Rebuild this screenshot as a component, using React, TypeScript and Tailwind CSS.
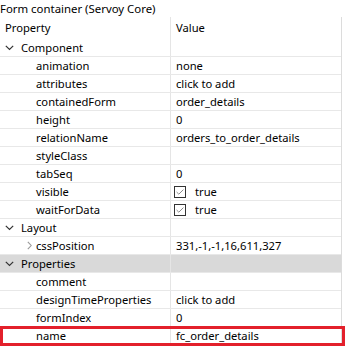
import React from "react";

type Row =
  | { kind: "cat"; label: string; gray?: boolean }
  | { kind: "prop"; label: string; value?: string; check?: boolean; expand?: boolean; red?: boolean };

const rows: Row[] = [
  { kind: "cat", label: "Component" },
  { kind: "prop", label: "animation", value: "none" },
  { kind: "prop", label: "attributes", value: "click to add" },
  { kind: "prop", label: "containedForm", value: "order_details" },
  { kind: "prop", label: "height", value: "0" },
  { kind: "prop", label: "relationName", value: "orders_to_order_details" },
  { kind: "prop", label: "styleClass", value: "" },
  { kind: "prop", label: "tabSeq", value: "0" },
  { kind: "prop", label: "visible", value: "true", check: true },
  { kind: "prop", label: "waitForData", value: "true", check: true },
  { kind: "cat", label: "Layout" },
  { kind: "prop", label: "cssPosition", value: "331,-1,-1,16,611,327", expand: true },
  { kind: "cat", label: "Properties", gray: true },
  { kind: "prop", label: "comment", value: "" },
  { kind: "prop", label: "designTimeProperties", value: "click to add" },
  { kind: "prop", label: "formIndex", value: "0" },
  { kind: "prop", label: "name", value: "fc_order_details", red: true },
];

function ChevronDown() {
  return (
    <svg width="9" height="6" viewBox="0 0 9 6" className="shrink-0">
      <path d="M0.8 0.8 L4.5 4.5 L8.2 0.8" fill="none" stroke="#333" strokeWidth="1.2" />
    </svg>
  );
}

function ChevronRight() {
  return (
    <svg width="5" height="9" viewBox="0 0 5 9" className="shrink-0">
      <path d="M0.8 0.8 L4.2 4.5 L0.8 8.2" fill="none" stroke="#9a9a9a" strokeWidth="1.1" />
    </svg>
  );
}

function Check() {
  return (
    <div className="w-[12px] h-[12px] border border-[#333] bg-white flex items-center justify-center shrink-0">
      <svg width="8" height="6" viewBox="0 0 8 6">
        <path d="M0.6 3 L2.8 5.2 L7.4 0.6" fill="none" stroke="#8a8a8a" strokeWidth="1" />
      </svg>
    </div>
  );
}

export default function App() {
  return (
    <div
      className="w-[346px] h-[347px] bg-white text-black text-[11.2px] leading-none overflow-hidden relative"
      style={{ fontFamily: '"Segoe UI", "Noto Sans", sans-serif' }}
    >
      <div className="h-[17px] flex items-center pl-0 text-[11.4px]">Form container (Servoy Core)</div>
      <div className="w-[342px] border-r border-[#dcdcdc]">
        <div className="h-[22px] flex">
          <div className="w-[171px] border-r border-[#e5e5e5] flex items-center pl-[5px]">Property</div>
          <div className="flex-1 flex items-center pl-[5px]">Value</div>
        </div>
        {rows.map((r, i) =>
          r.kind === "cat" ? (
            <div
              key={i}
              className={`h-[18px] flex border-b border-[#e8e8e8] ${r.gray ? "bg-[#d9d9d9]" : ""}`}
            >
              <div className="w-[171px] flex items-center pl-[5px] gap-[7px] border-r border-[#e5e5e5]">
                <ChevronDown />
                <span>{r.label}</span>
              </div>
              <div className="flex-1" />
            </div>
          ) : (
            <div key={i} className="h-[18px] flex border-b border-[#e8e8e8] relative">
              <div className="w-[171px] flex items-center border-r border-[#e5e5e5]">
                <div className="w-[36px] flex justify-end pr-[4px]">{r.expand ? <ChevronRight /> : null}</div>
                <span>{r.label}</span>
              </div>
              <div className="flex-1 flex items-center pl-[3px] gap-[9px]">
                {r.check ? <Check /> : null}
                <span className={r.check ? "" : "pl-[2px]"}>{r.value}</span>
              </div>
              {r.red ? (
                <div className="absolute left-0 top-[-1px] w-[345px] h-[20px] border-[3px] border-[#e3202b]" />
              ) : null}
            </div>
          )
        )}
      </div>
    </div>
  );
}
